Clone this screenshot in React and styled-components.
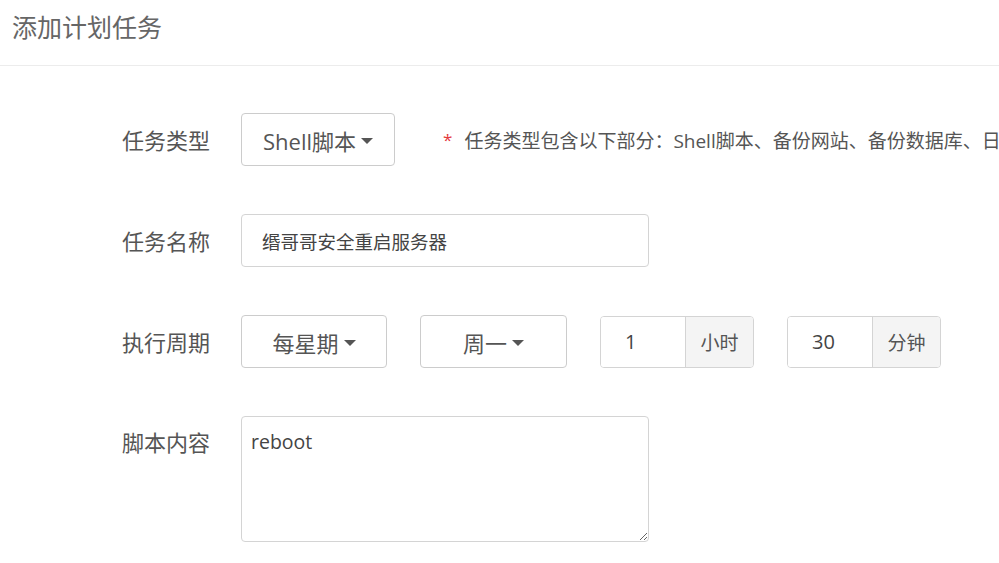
import React from "react";
import styled, { createGlobalStyle } from "styled-components";

const Global = createGlobalStyle`
  html, body { margin: 0; padding: 0; background: #fff; }
  body {
    font-family: "Open Sans", "Noto Sans CJK SC", sans-serif;
    color: #555;
  }
  * { box-sizing: border-box; }
`;

const Page = styled.div`
  width: 999px;
  height: 563px;
  overflow: hidden;
`;

const Header = styled.div`
  height: 66px;
  border-bottom: 1px solid #ececec;
  display: flex;
  align-items: center;
  padding: 0 0 14px 12px;
  font-size: 25px;
  color: #666;
`;

const Form = styled.div`
  padding-top: 47px;
  display: flex;
  flex-direction: column;
  gap: 48px;
`;

const Row = styled.div`
  display: flex;
  align-items: ${(p) => (p.$top ? "flex-start" : "center")};
  gap: 31px;
  white-space: nowrap;
`;

const Label = styled.div`
  width: 210px;
  flex: none;
  text-align: right;
  font-size: 22px;
  line-height: 52px;
  color: #555;
`;

const Controls = styled.div`
  display: flex;
  align-items: center;
  gap: 33px;
`;

const Dropdown = styled.button`
  width: ${(p) => p.$w}px;
  height: 53px;
  border: 1px solid #ccc;
  border-radius: 4px;
  background: #fff;
  color: #555;
  font-family: inherit;
  font-size: 22px;
  display: flex;
  align-items: center;
  justify-content: center;
  gap: 5px;
  padding: 0;
`;

const Caret = styled.span`
  width: 0;
  height: 0;
  border-left: 6px solid transparent;
  border-right: 6px solid transparent;
  border-top: 6px solid #555;
  margin-top: 2px;
`;

const Hint = styled.div`
  margin-left: 17px;
  font-size: 19px;
  color: #555;
  display: flex;
  align-items: center;
  gap: 12px;
`;

const Star = styled.span`
  color: #e4393c;
  font-size: 17px;
`;

const TextInput = styled.input`
  width: 408px;
  height: 53px;
  border: 1px solid #d4d4d4;
  border-radius: 4px;
  padding: 0 20px;
  font-family: inherit;
  font-size: 18.5px;
  color: #444;
  outline: none;
`;

const Group = styled.div`
  display: flex;
  height: 52px;
  border: 1px solid #d4d4d4;
  border-radius: 4px;
  overflow: hidden;
`;

const GroupInput = styled.input`
  width: 84px;
  border: none;
  padding: 0 0 0 24px;
  font-family: inherit;
  font-size: 20px;
  color: #444;
  outline: none;
`;

const Addon = styled.span`
  width: 68px;
  border-left: 1px solid #d4d4d4;
  background: #f4f4f4;
  display: flex;
  align-items: center;
  justify-content: center;
  font-size: 19px;
  color: #555;
`;

const Area = styled.textarea`
  width: 408px;
  height: 126px;
  border: 1px solid #d4d4d4;
  border-radius: 4px;
  padding: 12px 9px;
  font-family: inherit;
  font-size: 19.5px;
  line-height: 1.3;
  color: #444;
  resize: vertical;
  outline: none;
`;

export default function App() {
  return (
    <Page>
      <Global />
      <Header>添加计划任务</Header>
      <Form>
        <Row>
          <Label>任务类型</Label>
          <Controls>
            <Dropdown $w={154}>
              Shell脚本<Caret />
            </Dropdown>
          </Controls>
          <Hint>
            <Star>*</Star>
            任务类型包含以下部分：Shell脚本、备份网站、备份数据库、日志切割、释放内存、访问URL
          </Hint>
        </Row>
        <Row>
          <Label>任务名称</Label>
          <TextInput defaultValue="缗哥哥安全重启服务器" />
        </Row>
        <Row>
          <Label>执行周期</Label>
          <Controls>
            <Dropdown $w={146}>
              每星期<Caret />
            </Dropdown>
            <Dropdown $w={147}>
              周一<Caret />
            </Dropdown>
            <Group>
              <GroupInput defaultValue="1" />
              <Addon>小时</Addon>
            </Group>
            <Group>
              <GroupInput defaultValue="30" />
              <Addon>分钟</Addon>
            </Group>
          </Controls>
        </Row>
        <Row $top>
          <Label>脚本内容</Label>
          <Area defaultValue="reboot" />
        </Row>
      </Form>
    </Page>
  );
}
